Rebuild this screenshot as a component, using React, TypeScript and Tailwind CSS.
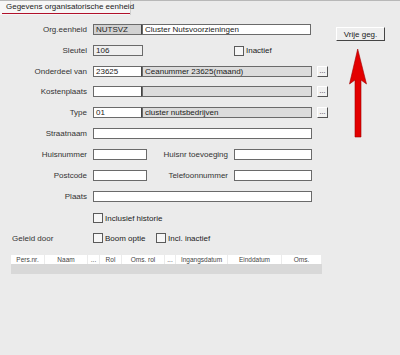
import React from "react";

const font = { fontFamily: '"Liberation Sans", Arial, sans-serif' };

function Input({ w, bg = "bg-white", text = "", extra = "" }: { w: string; bg?: string; text?: string; extra?: string }) {
  return (
    <div className={`${w} ${bg} ${extra} h-[11px] border border-[#6a6a6a] text-[8px] leading-[9px] text-[#222] pl-[2px] overflow-hidden whitespace-nowrap shrink-0`}>
      {text}
    </div>
  );
}

function Dots() {
  return (
    <div className="ml-[5px] w-[11px] h-[11px] shrink-0 bg-[#f2f2f2] border border-t-[#ffffff] border-l-[#ffffff] border-b-[#555] border-r-[#555] text-[7px] leading-[7px] text-center text-[#222]">
      ...
    </div>
  );
}

function Check() {
  return <div className="w-[10px] h-[10px] shrink-0 border border-[#5a5a5a] bg-[#f6f6f6]" />;
}

function Label({ children }: { children: React.ReactNode }) {
  return <div className="w-[87px] shrink-0 text-right text-[8px] leading-[9px] text-[#333] whitespace-nowrap">{children}</div>;
}

export default function App() {
  const cols: [string, number][] = [
    ["Pers.nr.", 34],
    ["Naam", 43],
    ["...", 12],
    ["Rol", 22],
    ["Oms. rol", 43],
    ["...", 11],
    ["Ingangsdatum", 52],
    ["Einddatum", 54],
    ["Oms.", 40],
  ];
  return (
    <div className="relative w-[400px] h-[355px] bg-[#ebebeb] overflow-hidden" style={font}>
      {/* tab strip */}
      <div className="h-[15px] border-t border-[#b8b8b8] flex">
        <div className="w-[131px] h-[14px] bg-[#f6f6f6] border-r border-[#cfcfcf] flex flex-col">
          <div className="h-[12px] pl-[6px] text-[8px] leading-[11px] text-[#222] whitespace-nowrap">Gegevens organisatorische eenheid</div>
          <div className="ml-[2px] h-px bg-[#b0102a]" />
        </div>
      </div>

      <div className="flex flex-col">
        {/* Org.eenheid */}
        <div className="mt-[9px] flex items-center h-[11px]">
          <Label>Org.eenheid</Label>
          <div className="ml-[6px] flex">
            <Input w="w-[50px]" bg="bg-[#d2d2d2]" text="NUTSVZ" extra="border-r-2 border-r-[#444]" />
            <Input w="w-[169px]" text="Cluster Nutsvoorzieningen" extra="-ml-px" />
          </div>
          <button className="ml-[25px] self-start mt-[3px] w-[49px] h-[14px] shrink-0 bg-[#eeeeee] border border-t-white border-l-white border-b-[#444] border-r-[#444] text-[8px] leading-[11px] text-[#222]">
            Vrije geg.
          </button>
        </div>

        {/* Sleutel */}
        <div className="mt-[10px] flex items-center h-[11px]">
          <Label>Sleutel</Label>
          <div className="ml-[6px]">
            <Input w="w-[50px]" bg="bg-[#efefef]" text="106" />
          </div>
          <div className="ml-[91px] flex items-center">
            <Check />
            <span className="ml-[2px] text-[8px] leading-[9px] text-[#222]">Inactief</span>
          </div>
        </div>

        {/* Onderdeel van */}
        <div className="mt-[10px] flex items-center h-[11px]">
          <Label>Onderdeel van</Label>
          <div className="ml-[6px] flex">
            <Input w="w-[50px]" text="23625" extra="border-r-2 border-r-[#444]" />
            <Input w="w-[170px]" bg="bg-[#dcdcdc]" text="Ceanummer 23625(maand)" extra="-ml-px" />
          </div>
          <Dots />
        </div>

        {/* Kostenplaats */}
        <div className="mt-[9px] flex items-center h-[11px]">
          <Label>Kostenplaats</Label>
          <div className="ml-[6px] flex">
            <Input w="w-[50px]" extra="border-r-2 border-r-[#444]" />
            <Input w="w-[170px]" bg="bg-[#dcdcdc]" extra="-ml-px" />
          </div>
          <Dots />
        </div>

        {/* Type */}
        <div className="mt-[10px] flex items-center h-[11px]">
          <Label>Type</Label>
          <div className="ml-[6px] flex">
            <Input w="w-[50px]" text="01" extra="border-r-2 border-r-[#444]" />
            <Input w="w-[170px]" bg="bg-[#dcdcdc]" text="cluster nutsbedrijven" extra="-ml-px" />
          </div>
          <Dots />
        </div>

        {/* Straatnaam */}
        <div className="mt-[10px] flex items-center h-[11px]">
          <Label>Straatnaam</Label>
          <div className="ml-[6px]">
            <Input w="w-[219px]" />
          </div>
        </div>

        {/* Huisnummer */}
        <div className="mt-[10px] flex items-center h-[11px]">
          <Label>Huisnummer</Label>
          <div className="ml-[6px]">
            <Input w="w-[54px]" />
          </div>
          <div className="w-[81px] shrink-0 text-right text-[8px] leading-[9px] text-[#333] whitespace-nowrap">Huisnr toevoeging</div>
          <div className="ml-[6px]">
            <Input w="w-[78px]" />
          </div>
        </div>

        {/* Postcode */}
        <div className="mt-[10px] flex items-center h-[11px]">
          <Label>Postcode</Label>
          <div className="ml-[6px]">
            <Input w="w-[54px]" />
          </div>
          <div className="w-[81px] shrink-0 text-right text-[8px] leading-[9px] text-[#333] whitespace-nowrap">Telefoonnummer</div>
          <div className="ml-[6px]">
            <Input w="w-[78px]" />
          </div>
        </div>

        {/* Plaats */}
        <div className="mt-[10px] flex items-center h-[11px]">
          <Label>Plaats</Label>
          <div className="ml-[6px]">
            <Input w="w-[219px]" />
          </div>
        </div>

        {/* Inclusief historie */}
        <div className="mt-[11px] flex items-center h-[10px] pl-[93px]">
          <Check />
          <span className="ml-[2px] text-[8px] leading-[9px] text-[#222]">Inclusief historie</span>
        </div>

        {/* Geleid door */}
        <div className="mt-[10px] flex items-center h-[10px]">
          <div className="w-[93px] shrink-0 pl-[12px] text-[8px] leading-[9px] text-[#333]">Geleid door</div>
          <Check />
          <span className="ml-[2px] w-[51px] text-[8px] leading-[9px] text-[#222]">Boom optie</span>
          <Check />
          <span className="ml-[2px] text-[8px] leading-[9px] text-[#222]">Incl. inactief</span>
        </div>

        {/* table */}
        <div className="mt-[12px] ml-[11px] w-[311px] flex flex-col">
          <div className="flex h-[9px] gap-px">
            {cols.map(([t, w], i) => (
              <div
                key={i}
                className="bg-white text-center text-[6.5px] leading-[9px] text-[#444] whitespace-nowrap overflow-hidden"
                style={{ width: w - 1 }}
              >
                {t}
              </div>
            ))}
          </div>
          <div className="h-[10px] bg-[#d8d8d8]" />
        </div>
      </div>

      {/* annotation arrow */}
      <svg className="absolute left-[340px] top-[40px]" width="36" height="100" viewBox="0 0 36 100">
        <path
          d="M17.7 9 L9.5 44 L15 40 L15 97 L21 97 L21 40 L26.5 44 Z"
          fill="#e30000"
          stroke="#a00000"
          strokeWidth="0.6"
        />
      </svg>
    </div>
  );
}
